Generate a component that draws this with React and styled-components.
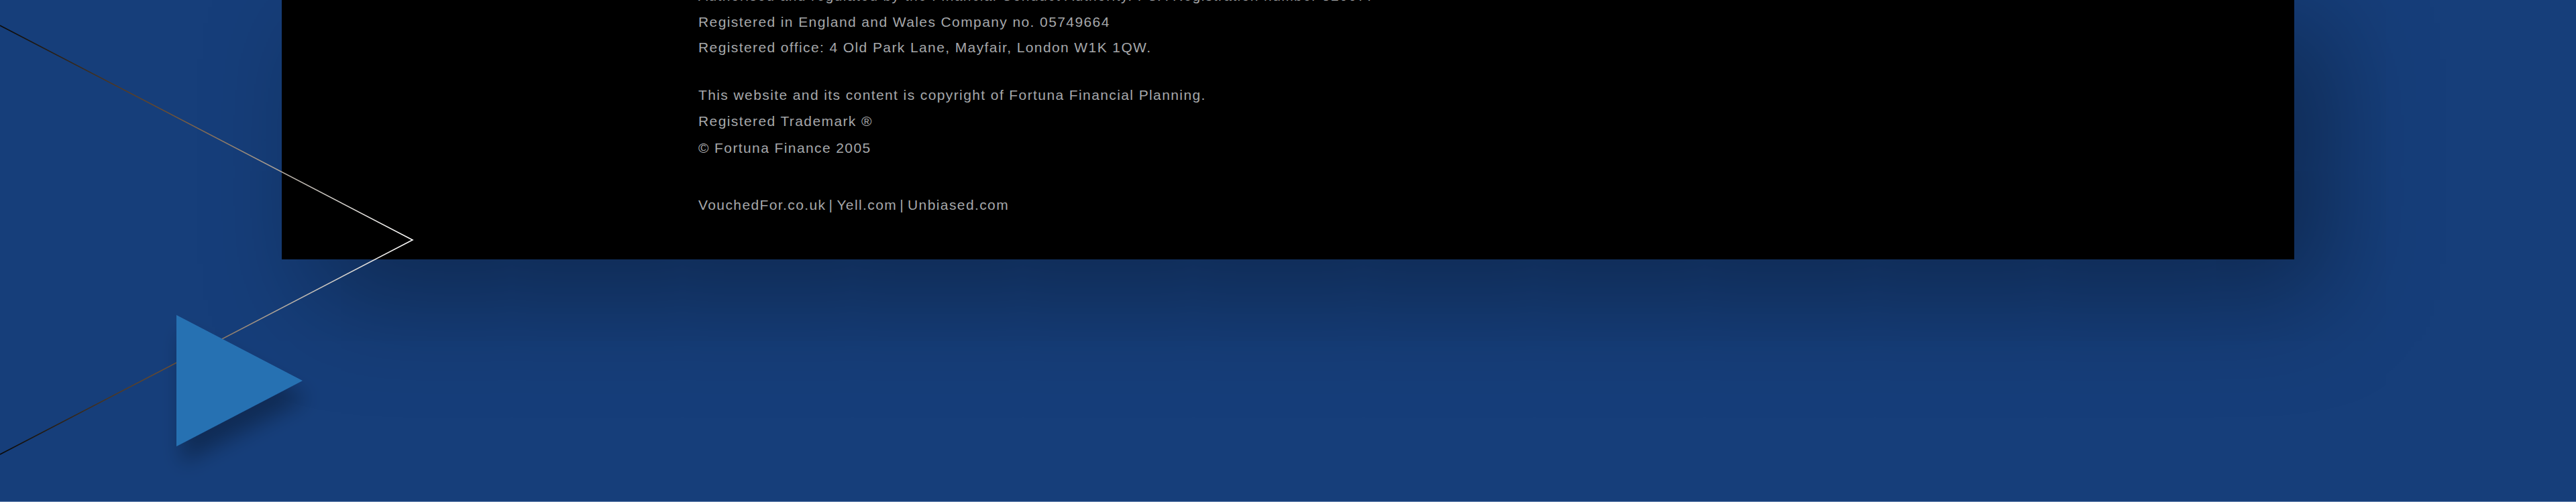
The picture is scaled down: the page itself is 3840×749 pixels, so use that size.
import styled, { createGlobalStyle } from "styled-components";

const GlobalStyle = createGlobalStyle`
    html, body {
        margin: 0;
        padding: 0;
        background-color: #163e7a;
        overflow: hidden;
    }
`;

const App = () => {
    return (
        <>
            <GlobalStyle />
            <Page>
                <Stage>
                    <Panel>
                        <Group $tight>
                            <Line>Authorised and regulated by the Financial Conduct Authority. FCA Registration number 520077</Line>
                            <Line>Registered in England and Wales Company no. 05749664</Line>
                            <Line>Registered office: 4 Old Park Lane, Mayfair, London W1K 1QW.</Line>
                        </Group>
                        <Group>
                            <Line>This website and its content is copyright of Fortuna Financial Planning.</Line>
                            <Line>Registered Trademark ®</Line>
                            <Line>© Fortuna Finance 2005</Line>
                        </Group>
                        <Links>
                            <LinkItem href="#">VouchedFor.co.uk</LinkItem>
                            <Pipe>|</Pipe>
                            <LinkItem href="#">Yell.com</LinkItem>
                            <Pipe>|</Pipe>
                            <LinkItem href="#">Unbiased.com</LinkItem>
                        </Links>
                    </Panel>

                    <Decor width="700" height="749" viewBox="0 0 700 749" aria-hidden="true">
                        <defs>
                            <linearGradient id="chevronStroke" gradientUnits="userSpaceOnUse" x1="0" y1="0" x2="615" y2="0">
                                <stop offset="0" stopColor="#0a0a0a" />
                                <stop offset="0.4" stopColor="#6a4c30" />
                                <stop offset="0.72" stopColor="#b9b3ab" />
                                <stop offset="1" stopColor="#ffffff" />
                            </linearGradient>
                            <filter id="arrowShadow" x="-50%" y="-50%" width="200%" height="200%">
                                <feDropShadow dx="8" dy="26" stdDeviation="15" floodColor="#000000" floodOpacity="0.3" />
                            </filter>
                        </defs>
                        <polyline
                            points="0,38 615,358 0,678"
                            fill="none"
                            stroke="url(#chevronStroke)"
                            strokeWidth="1.6"
                            strokeLinejoin="miter"
                        />
                        <polygon points="263,470 263,666 451,568" fill="#2871b2" filter="url(#arrowShadow)" />
                    </Decor>
                </Stage>
                <Rule />
            </Page>
        </>
    );
};

const Page = styled.div`
    width: 100%;
    height: 749px;
    display: flex;
    flex-direction: column;
    background-color: #163e7a;
`;

const Stage = styled.div`
    position: relative;
    flex: 1;
    overflow: hidden;
`;

const Panel = styled.footer`
    width: 3000px;
    box-sizing: border-box;
    margin: -25px auto 0 auto;
    padding: 0 0 61px 621px;
    background-color: #000000;
    box-shadow: 50px 60px 160px rgba(0, 0, 0, 0.34);
    font-family: "Liberation Sans", Arial, sans-serif;
    font-size: 21px;
    letter-spacing: 1.4px;
    line-height: 39.5px;
    color: #a6a8ab;
`;

const Group = styled.div`
    display: flex;
    flex-direction: column;
    line-height: ${({ $tight }) => ($tight ? "38.5px" : "39.5px")};
    margin-bottom: 31px;
`;

const Line = styled.p`
    margin: 0;
    white-space: nowrap;
`;

const Links = styled.p`
    margin: 46px 0 0 0;
    white-space: nowrap;
`;

const LinkItem = styled.a`
    color: #a6a8ab;
    text-decoration: none;
`;

const Pipe = styled.span`
    margin: 0 5px 0 4px;
`;

const Decor = styled.svg`
    position: absolute;
    left: 0;
    top: 0;
    pointer-events: none;
`;

const Rule = styled.div`
    height: 1px;
    background-color: #6f8bb5;
`;

export default App;
